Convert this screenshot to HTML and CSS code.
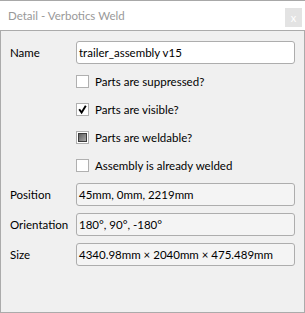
FILE: index.html
```html
<!DOCTYPE html>
<html lang="en">

<head>
    <meta charset="UTF-8">
    <title>Detail - Verbotics Weld</title>
    <link rel="stylesheet" href="styles.css">
</head>

<body>
    <div class="window">
        <div class="titlebar">
            <span class="title">Detail - Verbotics Weld</span>
            <span class="close">x</span>
        </div>

        <div class="panel">
            <div class="row">
                <label>Name</label>
                <div class="field editable">trailer_assembly v15</div>
            </div>

            <div class="checks">
                <div class="check"><span class="box"></span>Parts are suppressed?</div>
                <div class="check">
                    <span class="box">
                        <svg width="11" height="11" viewBox="0 0 11 11"><path d="M2.2 5.2 L4.6 8.6 L8.8 1.8" fill="none" stroke="#000" stroke-width="1.9"/></svg>
                    </span>Parts are visible?
                </div>
                <div class="check"><span class="box"><span class="fill"></span></span>Parts are weldable?</div>
                <div class="check"><span class="box"></span>Assembly is already welded</div>
            </div>

            <div class="props">
                <div class="row">
                    <label>Position</label>
                    <div class="field">45mm, 0mm, 2219mm</div>
                </div>
                <div class="row">
                    <label>Orientation</label>
                    <div class="field">180°, 90°, -180°</div>
                </div>
                <div class="row">
                    <label>Size</label>
                    <div class="field">4340.98mm × 2040mm × 475.489mm</div>
                </div>
            </div>
        </div>
    </div>
</body>

</html>
```

FILE: styles.css
```css
body {
    margin: 0;
    background: #fff;
    font-family: Lato, 'Open Sans', sans-serif;
    font-size: 11.5px;
    color: #000;
}

.window {
    width: 305px;
    height: 313px;
    display: flex;
    flex-direction: column;
}

.titlebar {
    height: 30px;
    border-top: 1px solid #a8a8a8;
    display: flex;
    align-items: center;
    justify-content: space-between;
    padding: 0 3px 0 8px;
}

.title {
    color: #999;
    font-size: 11.5px;
}

.close {
    width: 17px;
    height: 19px;
    background: #e3e3e3;
    color: #fff;
    font-size: 11px;
    display: flex;
    align-items: center;
    justify-content: center;
    margin-top: 4px;
}

.panel {
    height: 279px;
    border: 1px solid #ababab;
    background: #f0f0f0;
    padding: 10px 9px 0 9px;
}

.row {
    display: grid;
    grid-template-columns: 66px 1fr;
    align-items: center;
}

.field {
    height: 21px;
    border: 1px solid #adadad;
    border-radius: 3px;
    background: #f4f4f4;
    padding-left: 2px;
    display: flex;
    align-items: center;
    white-space: nowrap;
}

.field.editable {
    background: #fff;
}

.checks {
    margin: 3px 0 0 66px;
}

.check {
    height: 28px;
    display: flex;
    align-items: center;
    gap: 6px;
}

.box {
    width: 11px;
    height: 11px;
    border: 1px solid #b0b0b0;
    background: #fff;
    display: flex;
    align-items: center;
    justify-content: center;
}

.box .fill {
    width: 7px;
    height: 7px;
    border: 1px solid #3c3c3c;
    background: linear-gradient(135deg, #5e5e5e, #a9a9a9);
}

.props {
    margin-top: 4px;
    display: flex;
    flex-direction: column;
    gap: 7px;
}
```
